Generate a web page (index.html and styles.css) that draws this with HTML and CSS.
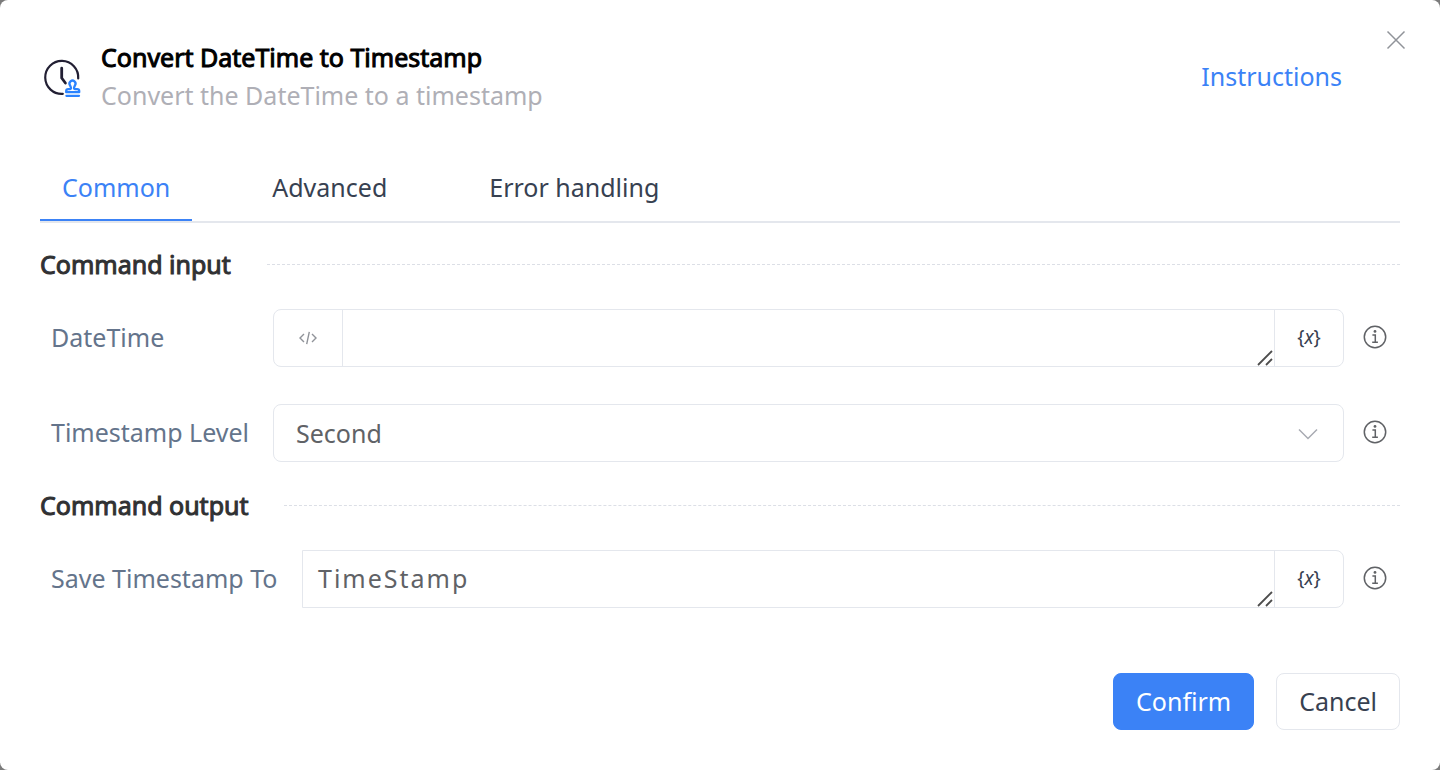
FILE: index.html
```html
<!DOCTYPE html>
<html lang="en">
<head>
<meta charset="utf-8">
<meta name="viewport" content="width=device-width, initial-scale=1">
<title>Convert DateTime to Timestamp</title>
<link rel="stylesheet" href="styles.css">
</head>
<body>
<svg class="sprite" aria-hidden="true">
  <symbol id="info" viewBox="0 0 24 24">
    <g fill="none" stroke="currentColor" stroke-width="1.5">
      <circle cx="12" cy="12" r="10.7"/>
      <path d="M9.4 10h2.9v7.2M9.2 17.2h5.7"/>
    </g>
    <circle cx="12" cy="6.4" r="1.4" fill="currentColor"/>
  </symbol>
  <symbol id="grip" viewBox="0 0 16 16">
    <path d="M1 15 15 1M9 15l6-6" fill="none" stroke="currentColor" stroke-width="1.8"/>
  </symbol>
</svg>
<main class="dialog" role="dialog" aria-labelledby="dialog-title">
  <button class="close" type="button" aria-label="Close">
    <svg viewBox="0 0 20 20" width="20" height="20"><path d="M1.5 1.5 18.5 18.5M18.5 1.5 1.5 18.5" fill="none" stroke="currentColor" stroke-width="1.5"/></svg>
  </button>
  <header class="header">
    <svg class="logo" viewBox="0 0 40 40" width="40" height="40" aria-hidden="true">
      <g fill="none" stroke-linecap="round" stroke-linejoin="round">
        <path d="M20.8 35.9A16.5 16.5 0 1 1 36.2 20.5" stroke="#221f33" stroke-width="2.2"/>
        <path d="M19.700 10.200v9.800l3.700 5" stroke="#221f33" stroke-width="2.800"/>
        <path d="M24.200 34.200v-1.300q0-1.800 2-1.800h1.600q1.500 0 1.100-1.700l-.9-2.100a3 3 0 1 1 5 0l-.9 2.100q-.4 1.700 1.100 1.700h2q2 0 2 1.800v1.300z" stroke="#2b83ff" stroke-width="2.300"/>
        <path d="M24.400 37.800h12.600" stroke="#2b83ff" stroke-width="2.300"/>
      </g>
    </svg>
    <div class="titles">
      <h1 class="title" id="dialog-title">Convert DateTime to Timestamp</h1>
      <p class="subtitle">Convert the DateTime to a timestamp</p>
    </div>
    <a class="help" href="#">Instructions</a>
  </header>
  <nav class="tabs" role="tablist">
    <button class="tab tab-active" type="button" role="tab" aria-selected="true">Common</button>
    <button class="tab" type="button" role="tab" aria-selected="false">Advanced</button>
    <button class="tab" type="button" role="tab" aria-selected="false">Error handling</button>
  </nav>
  <form class="form">
    <h2 class="section">Command input</h2>
    <div class="row">
      <label class="label" for="datetime">DateTime</label>
      <div class="group">
        <button class="addon addon-code" type="button" aria-label="Code mode">
          <svg viewBox="0 0 18 14" width="18" height="14"><path d="M5 3 1 7l4 4M13 3l4 4-4 4M10.3.8 7.7 13.2" fill="none" stroke="currentColor" stroke-width="1.4"/></svg>
        </button>
        <div class="area">
          <textarea class="input" id="datetime" rows="1"></textarea>
          <svg class="grip" aria-hidden="true"><use href="#grip"/></svg>
        </div>
        <button class="addon addon-var" type="button">{<i>x</i>}</button>
      </div>
      <svg class="info" role="img" aria-label="Information"><use href="#info"/></svg>
    </div>
    <div class="row">
      <label class="label" for="level">Timestamp Level</label>
      <div class="picker">
        <select class="select" id="level"><option>Second</option></select>
        <svg class="chevron" viewBox="0 0 20 12" width="20" height="12" aria-hidden="true"><path d="m1 1.5 9 9 9-9" fill="none" stroke="currentColor" stroke-width="1.5"/></svg>
      </div>
      <svg class="info" role="img" aria-label="Information"><use href="#info"/></svg>
    </div>
    <h2 class="section">Command output</h2>
    <div class="row">
      <label class="label label-wide" for="output">Save Timestamp To</label>
      <div class="group group-square">
        <div class="area">
          <textarea class="input input-spaced" id="output" rows="1" spellcheck="false">TimeStamp</textarea>
          <svg class="grip" aria-hidden="true"><use href="#grip"/></svg>
        </div>
        <button class="addon addon-var" type="button">{<i>x</i>}</button>
      </div>
      <svg class="info" role="img" aria-label="Information"><use href="#info"/></svg>
    </div>
    <footer class="footer">
      <button class="button button-primary" type="submit">Confirm</button>
      <button class="button" type="button">Cancel</button>
    </footer>
  </form>
</main>
</body>
</html>
```
FILE: styles.css
```css
* { box-sizing: border-box; }
body {
  margin: 0;
  background: #7b7b7b;
  font: 400 25px/38px "Noto Sans", sans-serif;
  color: #374151;
}
button, textarea, select { font: inherit; color: inherit; }
button { cursor: pointer; }
h1, h2, p { margin: 0; }
.sprite { position: absolute; width: 0; height: 0; }
.dialog {
  position: relative;
  min-height: 100vh;
  padding: 38px 40px 40px;
  background: #fff;
  border-radius: 8px;
}
.close {
  position: absolute;
  top: 30px;
  right: 34px;
  display: flex;
  padding: 0;
  border: 0;
  background: none;
  color: #909399;
}
.header { display: flex; align-items: center; padding-right: 58px; }
.logo { margin: 4px 19px 0 2px; flex: none; }
.titles { flex: 1; }
.title, .section { font-size: 25px; font-weight: 400; -webkit-text-stroke: 1px currentColor; }
.title { color: #000; }
.subtitle { color: #afafb6; }
.help { color: #3b82f6; text-decoration: none; }
.tabs {
  display: flex;
  gap: 58px;
  margin-top: 54px;
  border-bottom: 2px solid #e4e7ed;
}
.tab {
  height: 53px;
  padding: 0 22px 14px;
  border: 0;
  border-bottom: 2px solid transparent;
  background: none;
}
.tab-active { color: #3b82f6; border-color: #3b82f6; }
.section {
  display: flex;
  align-items: center;
  gap: 36px;
  margin-top: 22px;
  color: #303133;
}
.section::after { content: ""; flex: 1; border-top: 1px dashed #dcdfe6; }
.row { display: flex; align-items: center; padding-right: 13px; }
.section + .row { margin-top: 26px; }
.row + .row { margin-top: 37px; }
.row + .section { margin-top: 24px; }
.label { flex: none; width: 233px; padding: 0 0 2px 11px; color: #64748b; white-space: nowrap; }
.label-wide { width: 262px; }
.group, .picker { flex: 1; min-width: 0; height: 58px; border: 1px solid #e4e7ed; border-radius: 8px; }
.group { display: flex; }
.group-square { border-radius: 0 8px 8px 0; }
.addon {
  flex: none;
  display: flex;
  align-items: center;
  justify-content: center;
  width: 69px;
  padding: 0;
  border: 0;
  background: none;
}
.addon-code { border-right: 1px solid #e4e7ed; color: #909399; }
.addon-var { border-left: 1px solid #e4e7ed; padding-bottom: 2px; font-size: 19px; }
.area { position: relative; flex: 1; display: flex; min-width: 0; }
.input {
  flex: 1;
  min-width: 0;
  padding: 8px 15px;
  border: 0;
  outline: 0;
  background: none;
  color: #606266;
  resize: none;
  overflow: hidden;
}
.input-spaced { letter-spacing: 2px; }
.grip { position: absolute; right: 1px; bottom: 0; width: 16px; height: 16px; color: #4d4d4d; }
.picker { position: relative; }
.select {
  width: 100%;
  height: 100%;
  padding: 0 60px 0 22px;
  border: 0;
  border-radius: 8px;
  outline: 0;
  appearance: none;
  background: none;
  color: #606266;
}
.chevron { position: absolute; right: 25px; top: 23px; color: #a8abb2; pointer-events: none; }
.info { flex: none; width: 24px; height: 24px; margin: 0 0 2px 19px; color: #606266; }
.footer { display: flex; justify-content: flex-end; gap: 22px; margin-top: 65px; }
.button {
  height: 57px;
  padding: 0 22px 2px;
  border: 1px solid #e4e7ed;
  border-radius: 8px;
  background: #fff;
}
.button-primary { border-color: #3b82f6; background: #3b82f6; color: #fff; }
```
